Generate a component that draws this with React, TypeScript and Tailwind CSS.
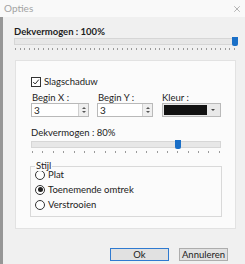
import { X } from 'lucide-react'

const font = { fontFamily: 'Lato, "Open Sans", sans-serif' }

function Ticks({ count, className }: { count: number; className: string }) {
  return (
    <div className={`flex justify-between ${className}`}>
      {Array.from({ length: count }).map((_, i) => (
        <div key={i} className="w-px h-[2px] bg-[#9a9a9a]" />
      ))}
    </div>
  )
}

function Slider({ pos, ticks, width }: { pos: number; ticks: number; width: string }) {
  return (
    <div className={width}>
      <div className="relative h-[7px] bg-[#e7e7e7] border border-[#d6d6d6]">
        <div
          className="absolute top-[-2px] w-[6px] h-[9px] bg-[#1a6fc7] rounded-b-[2px]"
          style={{ left: `calc(${pos}% - 3px)` }}
        />
      </div>
      <Ticks count={ticks} className="mt-[3px] px-[1px]" />
    </div>
  )
}

function Spin({ value, w }: { value: string; w: string }) {
  return (
    <div className={`flex items-center h-[14px] ${w} bg-white border border-[#b9b9b9]`}>
      <span className="flex-1 pl-[2px] text-[10px] leading-none text-[#222]">{value}</span>
      <div className="w-[10px] h-full flex flex-col items-center justify-center gap-[2px] bg-[#efefef] border-l border-[#d0d0d0]">
        <div className="w-0 h-0 border-x-[2px] border-x-transparent border-b-[2px] border-b-[#555]" />
        <div className="w-0 h-0 border-x-[2px] border-x-transparent border-t-[2px] border-t-[#555]" />
      </div>
    </div>
  )
}

function Radio({ label, checked }: { label: string; checked?: boolean }) {
  return (
    <div className="flex items-center gap-[3px] h-[15px]">
      <div className="w-[10px] h-[10px] rounded-full border border-[#333] bg-white flex items-center justify-center">
        {checked && <div className="w-[5px] h-[5px] rounded-full bg-[#222]" />}
      </div>
      <span className="text-[9.5px] leading-none text-[#222]">{label}</span>
    </div>
  )
}

export default function App() {
  return (
    <div className="w-[245px] h-[264px] flex bg-[#f0f0f0] overflow-hidden" style={font}>
      <div className="w-[3px] mt-[17px] bg-[#969696]" />
      <div className="flex-1 flex flex-col">
        <div className="h-[17px] shrink-0 -ml-[3px] pl-[4px] pr-[3px] flex items-center justify-between bg-[#f9f9f9]">
          <span className="text-[10px] text-[#a3a3a3]">Opties</span>
          <X className="w-[10px] h-[10px] text-[#8a8a8a]" strokeWidth={1.5} />
        </div>

        <div className="pl-[11px] pr-[6px] pt-[10px]">
          <div className="text-[9.5px] leading-[10px] font-bold text-[#1e1e1e]">Dekvermogen : 100%</div>
          <div className="mt-[1px]">
            <Slider pos={100} ticks={48} width="w-[222px]" />
          </div>
        </div>

        <div className="shrink-0 ml-[12px] mr-[9px] mt-[10px] h-[169px] bg-[#fbfbfb] border border-[#e2e2e2] pl-[15px] pt-[15px]">
          <div className="flex items-center gap-[3px] h-[11px]">
            <div className="w-[10px] h-[10px] border border-[#333] bg-white flex items-center justify-center">
              <svg viewBox="0 0 10 10" className="w-[8px] h-[8px]">
                <path d="M1.5 5 L4 7.5 L8.5 2" fill="none" stroke="#222" strokeWidth={1.2} />
              </svg>
            </div>
            <span className="text-[9.5px] leading-none text-[#222]">Slagschaduw</span>
          </div>

          <div className="flex gap-[8px] mt-[6px]">
            <div>
              <div className="text-[9.5px] leading-[10px] text-[#222] pl-[1px]">Begin X :</div>
              <Spin value="3" w="w-[58px]" />
            </div>
            <div>
              <div className="text-[9.5px] leading-[10px] text-[#222] pl-[1px]">Begin Y :</div>
              <Spin value="3" w="w-[56px]" />
            </div>
            <div className="ml-[1px]">
              <div className="text-[9.5px] leading-[10px] text-[#222]">Kleur :</div>
              <div className="flex items-center h-[14px] w-[59px] bg-[#e9e9e9] border border-[#b9b9b9] p-[1px]">
                <div className="flex-1 h-full bg-[#111]" />
                <div className="w-[12px] flex justify-center">
                  <div className="w-0 h-0 border-x-[2px] border-x-transparent border-t-[2px] border-t-[#444]" />
                </div>
              </div>
            </div>
          </div>

          <div className="mt-[11px] text-[9.5px] leading-[10px] text-[#222]">Dekvermogen : 80%</div>
          <div className="mt-[3px]">
            <Slider pos={77.5} ticks={19} width="w-[190px]" />
          </div>

          <div className="relative mt-[13px] w-[192px] h-[51px] border border-[#d9d9d9] -ml-[1px] pl-[4px]">
            <span className="absolute -top-[6px] left-[4px] px-[1px] bg-[#fbfbfb] text-[9.5px] leading-[10px] text-[#222]">Stijl</span>
            <Radio label="Plat" />
            <Radio label="Toenemende omtrek" checked />
            <Radio label="Verstrooien" />
          </div>
        </div>

        <div className="flex justify-end gap-[10px] pr-[17px] mt-[19px]">
          <button className="w-[59px] h-[13px] bg-[#e1e1e1] border border-[#2f7ad0] text-[9.5px] leading-none text-[#222]">Ok</button>
          <button className="w-[49px] h-[13px] bg-[#e1e1e1] border border-[#adadad] text-[9.5px] leading-none text-[#222]">Annuleren</button>
        </div>
      </div>
    </div>
  )
}
